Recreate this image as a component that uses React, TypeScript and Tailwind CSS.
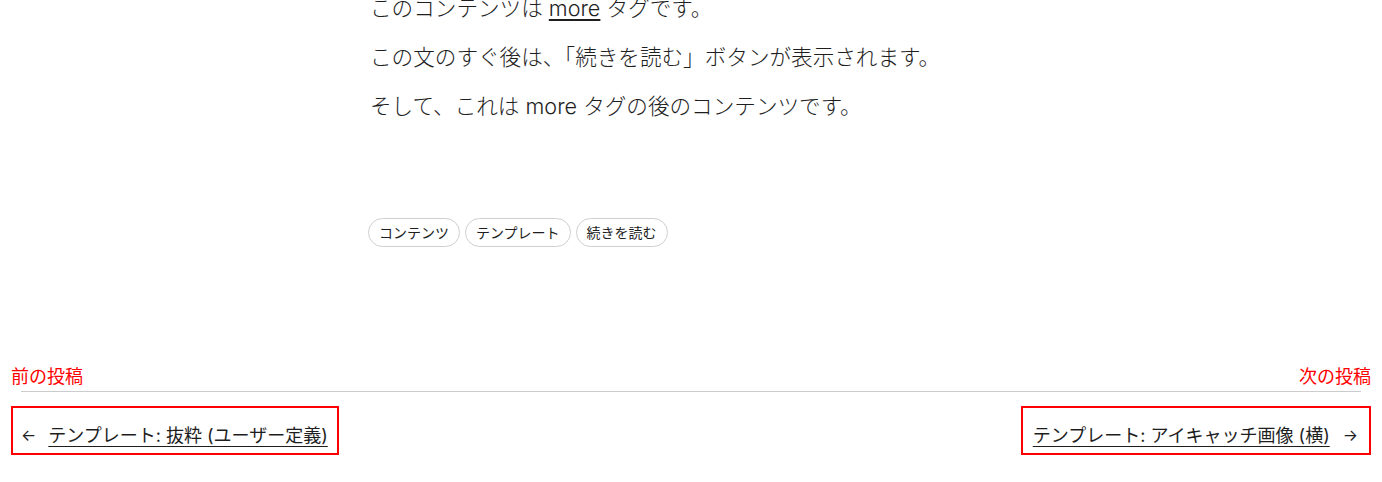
import React from "react";

export default function App() {
  return (
    <div className="w-[1382px] h-[482px] overflow-hidden bg-white text-[#1e1e1e] font-['Inter','Noto_Sans_CJK_JP',sans-serif]">
      <div className="w-[642px] mx-auto mt-[-6px] flex flex-col gap-[21px] text-[21.6px] leading-[28px] font-light">
        <p>
          このコンテンツは <a href="#" className="underline underline-offset-[3px]">more</a> タグです。
        </p>
        <p>この文のすぐ後は、「続きを読む」ボタンが表示されます。</p>
        <p>そして、これは more タグの後のコンテンツです。</p>
      </div>
      <div className="w-[642px] mx-auto mt-[98px] flex gap-[5px] -translate-x-[2px]">
        {["コンテンツ", "テンプレート", "続きを読む"].map((t) => (
          <span
            key={t}
            className="border border-[#cfcfcf] rounded-full px-[10px] py-[3px] text-[14px] leading-[21px] text-[#1e1e1e]"
          >
            {t}
          </span>
        ))}
      </div>
      <nav className="mx-[11px] mt-[116px]">
        <div className="flex justify-between text-[18px] leading-[27px] text-[#ff0000]">
          <span>前の投稿</span>
          <span>次の投稿</span>
        </div>
        <div className="mx-[10px] mt-[1px] h-px bg-[#cccccc]" />
        <div className="flex justify-between mt-[14px]">
          <a href="#" className="flex items-center border-2 border-[#ff0000] h-[49px] pt-[9px] pl-[8px] pr-[9px] text-[18px] leading-[27px]">
            <span className="mr-[12px] text-[16px]">←</span>
            <span className="underline underline-offset-[4px] decoration-[1px]">テンプレート: 抜粋 (ユーザー定義)</span>
          </a>
          <a href="#" className="flex items-center border-2 border-[#ff0000] h-[49px] pt-[9px] pl-[10px] pr-[11px] text-[18px] leading-[27px]">
            <span className="underline underline-offset-[4px] decoration-[1px]">テンプレート: アイキャッチ画像 (横)</span>
            <span className="ml-[13px] text-[16px]">→</span>
          </a>
        </div>
      </nav>
    </div>
  );
}
